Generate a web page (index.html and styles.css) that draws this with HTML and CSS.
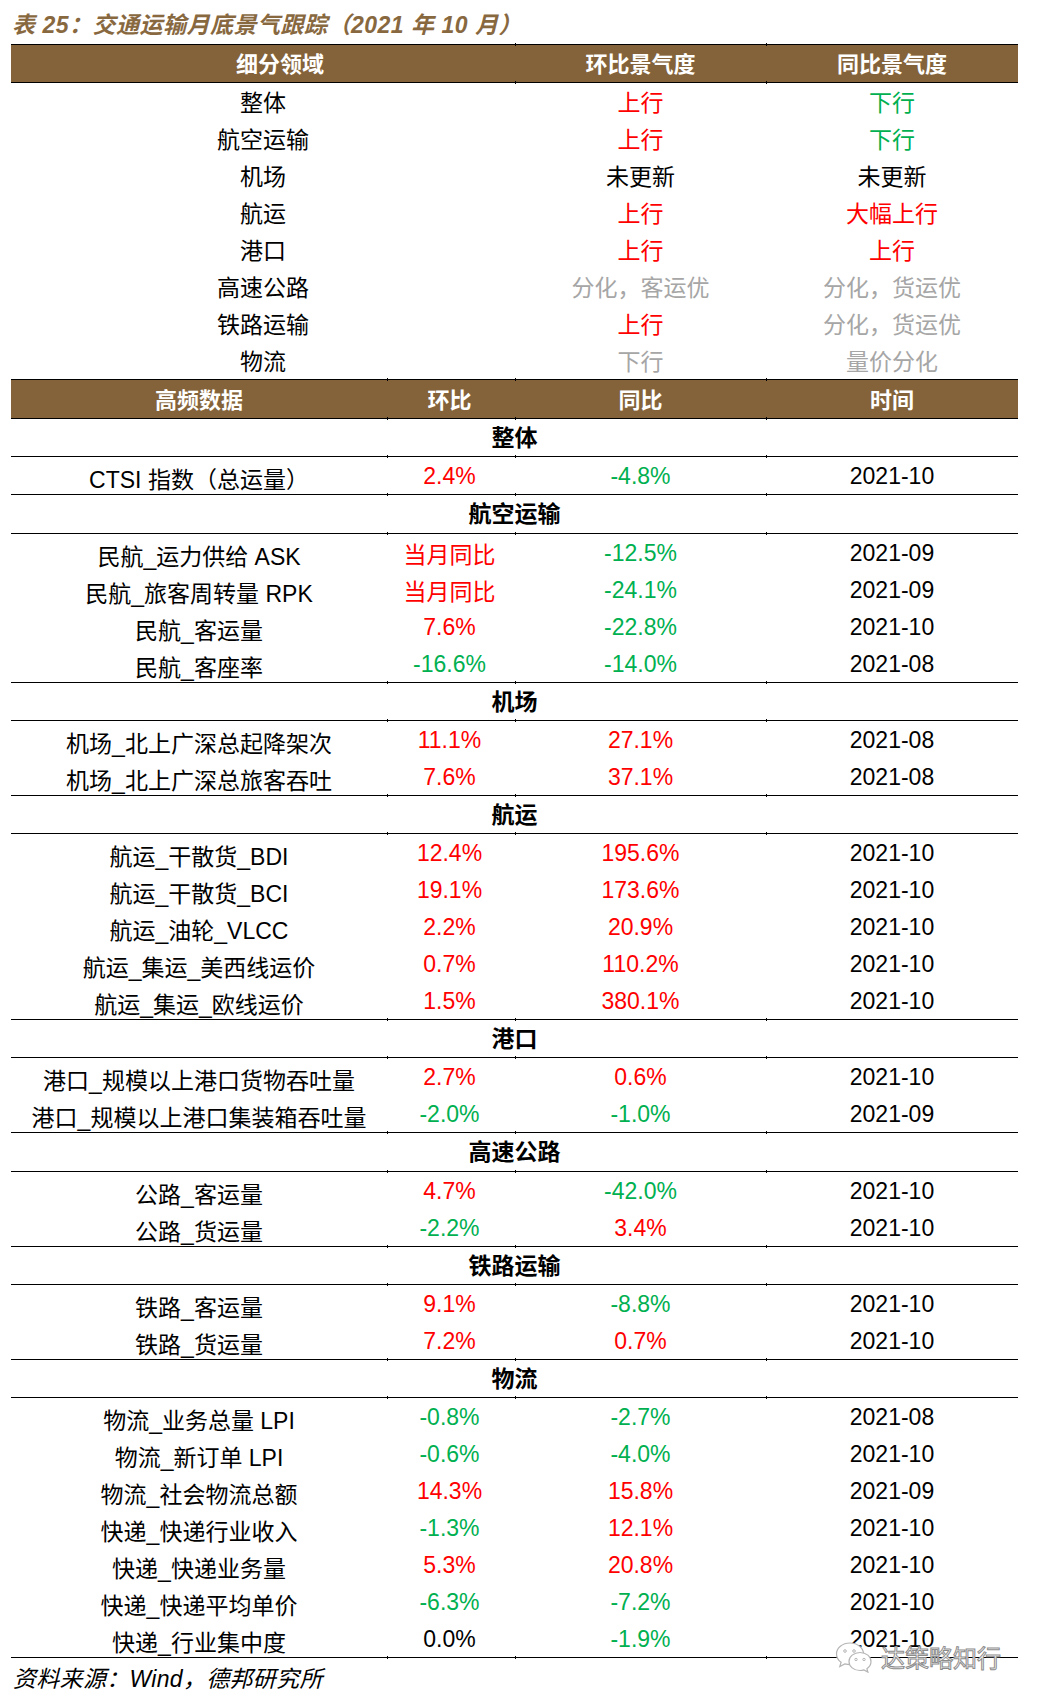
FILE: index.html
```html
<!DOCTYPE html>
<html lang="zh-CN">
<head>
<meta charset="utf-8">
<title>交通运输月底景气跟踪</title>
<link rel="stylesheet" href="styles.css">
</head>
<body>
<div class="page">
  <h1 class="title">表 25：交通运输月底景气跟踪（2021 年 10 月）</h1>
  <div class="tbl">
    <div class="rule c3"><i></i><i></i><i></i></div>
    <div class="hdr c3"><div class="h-first">细分领域</div><div>环比景气度</div><div>同比景气度</div></div>
    <div class="rule c3"><i></i><i></i><i></i></div>

    <div class="row1 c3"><div>整体</div><div class="up">上行</div><div class="dn">下行</div></div>
    <div class="row1 c3"><div>航空运输</div><div class="up">上行</div><div class="dn">下行</div></div>
    <div class="row1 c3"><div>机场</div><div>未更新</div><div>未更新</div></div>
    <div class="row1 c3"><div>航运</div><div class="up">上行</div><div class="up">大幅上行</div></div>
    <div class="row1 c3"><div>港口</div><div class="up">上行</div><div class="up">上行</div></div>
    <div class="row1 c3"><div>高速公路</div><div class="gr">分化，客运优</div><div class="gr">分化，货运优</div></div>
    <div class="row1 c3"><div>铁路运输</div><div class="up">上行</div><div class="gr">分化，货运优</div></div>
    <div class="row1 c3"><div>物流</div><div class="gr">下行</div><div class="gr">量价分化</div></div>

    <div class="rule c4"><i></i><i></i><i></i><i></i></div>
    <div class="hdr hdr2 c4"><div>高频数据</div><div class="v2">环比</div><div>同比</div><div>时间</div></div>
    <div class="rule c4"><i></i><i></i><i></i><i></i></div>

    <div class="sec">整体</div>
    <div class="rule c4"><i></i><i></i><i></i><i></i></div>
    <div class="row2 c4"><div>CTSI 指数（总运量）</div><div class="up">2.4%</div><div class="dn">-4.8%</div><div>2021-10</div></div>
    <div class="rule c4"><i></i><i></i><i></i><i></i></div>

    <div class="sec">航空运输</div>
    <div class="rule c4"><i></i><i></i><i></i><i></i></div>
    <div class="row2 c4"><div>民航_运力供给 ASK</div><div class="up txt">当月同比</div><div class="dn">-12.5%</div><div>2021-09</div></div>
    <div class="row2 c4"><div>民航_旅客周转量 RPK</div><div class="up txt">当月同比</div><div class="dn">-24.1%</div><div>2021-09</div></div>
    <div class="row2 c4"><div>民航_客运量</div><div class="up">7.6%</div><div class="dn">-22.8%</div><div>2021-10</div></div>
    <div class="row2 c4"><div>民航_客座率</div><div class="dn">-16.6%</div><div class="dn">-14.0%</div><div>2021-08</div></div>
    <div class="rule c4"><i></i><i></i><i></i><i></i></div>

    <div class="sec">机场</div>
    <div class="rule c4"><i></i><i></i><i></i><i></i></div>
    <div class="row2 c4"><div>机场_北上广深总起降架次</div><div class="up">11.1%</div><div class="up">27.1%</div><div>2021-08</div></div>
    <div class="row2 c4"><div>机场_北上广深总旅客吞吐</div><div class="up">7.6%</div><div class="up">37.1%</div><div>2021-08</div></div>
    <div class="rule c4"><i></i><i></i><i></i><i></i></div>

    <div class="sec">航运</div>
    <div class="rule c4"><i></i><i></i><i></i><i></i></div>
    <div class="row2 c4"><div>航运_干散货_BDI</div><div class="up">12.4%</div><div class="up">195.6%</div><div>2021-10</div></div>
    <div class="row2 c4"><div>航运_干散货_BCI</div><div class="up">19.1%</div><div class="up">173.6%</div><div>2021-10</div></div>
    <div class="row2 c4"><div>航运_油轮_VLCC</div><div class="up">2.2%</div><div class="up">20.9%</div><div>2021-10</div></div>
    <div class="row2 c4"><div>航运_集运_美西线运价</div><div class="up">0.7%</div><div class="up">110.2%</div><div>2021-10</div></div>
    <div class="row2 c4"><div>航运_集运_欧线运价</div><div class="up">1.5%</div><div class="up">380.1%</div><div>2021-10</div></div>
    <div class="rule c4"><i></i><i></i><i></i><i></i></div>

    <div class="sec">港口</div>
    <div class="rule c4"><i></i><i></i><i></i><i></i></div>
    <div class="row2 c4"><div>港口_规模以上港口货物吞吐量</div><div class="up">2.7%</div><div class="up">0.6%</div><div>2021-10</div></div>
    <div class="row2 c4"><div>港口_规模以上港口集装箱吞吐量</div><div class="dn">-2.0%</div><div class="dn">-1.0%</div><div>2021-09</div></div>
    <div class="rule c4"><i></i><i></i><i></i><i></i></div>

    <div class="sec">高速公路</div>
    <div class="rule c4"><i></i><i></i><i></i><i></i></div>
    <div class="row2 c4"><div>公路_客运量</div><div class="up">4.7%</div><div class="dn">-42.0%</div><div>2021-10</div></div>
    <div class="row2 c4"><div>公路_货运量</div><div class="dn">-2.2%</div><div class="up">3.4%</div><div>2021-10</div></div>
    <div class="rule c4"><i></i><i></i><i></i><i></i></div>

    <div class="sec">铁路运输</div>
    <div class="rule c4"><i></i><i></i><i></i><i></i></div>
    <div class="row2 c4"><div>铁路_客运量</div><div class="up">9.1%</div><div class="dn">-8.8%</div><div>2021-10</div></div>
    <div class="row2 c4"><div>铁路_货运量</div><div class="up">7.2%</div><div class="up">0.7%</div><div>2021-10</div></div>
    <div class="rule c4"><i></i><i></i><i></i><i></i></div>

    <div class="sec">物流</div>
    <div class="rule c4"><i></i><i></i><i></i><i></i></div>
    <div class="row2 c4"><div>物流_业务总量 LPI</div><div class="dn">-0.8%</div><div class="dn">-2.7%</div><div>2021-08</div></div>
    <div class="row2 c4"><div>物流_新订单 LPI</div><div class="dn">-0.6%</div><div class="dn">-4.0%</div><div>2021-10</div></div>
    <div class="row2 c4"><div>物流_社会物流总额</div><div class="up">14.3%</div><div class="up">15.8%</div><div>2021-09</div></div>
    <div class="row2 c4"><div>快递_快递行业收入</div><div class="dn">-1.3%</div><div class="up">12.1%</div><div>2021-10</div></div>
    <div class="row2 c4"><div>快递_快递业务量</div><div class="up">5.3%</div><div class="up">20.8%</div><div>2021-10</div></div>
    <div class="row2 c4"><div>快递_快递平均单价</div><div class="dn">-6.3%</div><div class="dn">-7.2%</div><div>2021-10</div></div>
    <div class="row2 c4"><div>快递_行业集中度</div><div>0.0%</div><div class="dn">-1.9%</div><div>2021-10</div></div>
    <div class="rule c4"><i></i><i></i><i></i><i></i></div>
  </div>
  <p class="source">资料来源：Wind，德邦研究所</p>

  <div class="wm">
    <svg class="wm-icon" width="40" height="32" viewBox="0 0 40 32">
      <path d="M16 2C8.3 2 2.5 7 2.5 13c0 3.4 1.8 6.3 4.6 8.3l-1.3 4.2 5-2.6c1.7.5 3.4.8 5.2.8 7.7 0 13.5-5 13.5-10.7C29.5 7 23.7 2 16 2z" fill="#fff" stroke="#b5b5b5" stroke-width="1.2"/>
      <circle cx="11" cy="10" r="1.3" fill="none" stroke="#b5b5b5" stroke-width="1"/>
      <circle cx="20" cy="10" r="1.3" fill="none" stroke="#b5b5b5" stroke-width="1"/>
      <path d="M26 11.5c-6.3 0-11 4.1-11 9 0 4.9 4.7 9 11 9 1.4 0 2.7-.2 3.9-.6l4 2.2-1-3.4c2.5-1.7 4.1-4.3 4.1-7.2 0-4.9-4.7-9-11-9z" fill="#fff" stroke="#b5b5b5" stroke-width="1.2"/>
      <circle cx="22" cy="18.5" r="1.2" fill="none" stroke="#b5b5b5" stroke-width="1"/>
      <circle cx="30" cy="18.5" r="1.2" fill="none" stroke="#b5b5b5" stroke-width="1"/>
    </svg>
    <span class="wm-text">达策略知行</span>
  </div>
</div>
</body>
</html>
```

FILE: styles.css
```css
* {
  box-sizing: border-box;
  margin: 0;
  padding: 0;
}

body {
  margin: 0;
  background: #ffffff;
  color: #000000;
  font-family: "Liberation Sans", "Noto Sans CJK SC", sans-serif;
}

.page {
  position: relative;
  width: 1039px;
  height: 1702px;
  padding: 9px 0 0 11px;
}

.title {
  height: 35px;
  padding-top: 1px;
  margin-left: 1px;
  font-size: 23px;
  line-height: 30px;
  font-weight: 700;
  font-style: italic;
  letter-spacing: 0.5px;
  color: #88683f;
}

.tbl {
  width: 1007px;
}

.c3 {
  display: grid;
  grid-template-columns: 504px 251px 252px;
}

.c4 {
  display: grid;
  grid-template-columns: 376px 128px 251px 252px;
}

.rule {
  height: 1px;
  background: #000000;
}

.rule i + i {
  margin: -1px 0;
  border-left: 1px solid #000000;
}

.hdr {
  height: 37px;
  padding-top: 3px;
  background: #84633a;
  color: #ffffff;
  font-size: 22px;
  line-height: 34px;
  font-weight: 700;
  text-align: center;
}

.hdr2 {
  height: 38px;
  line-height: 35px;
}

.h-first {
  padding-left: 34px;
}

.v2 {
  padding-right: 3px;
}

.row1 {
  height: 37px;
  padding-top: 4px;
  font-size: 23px;
  line-height: 33px;
  text-align: center;
  white-space: nowrap;
}

.row2 {
  height: 37px;
  font-size: 23px;
  text-align: center;
  white-space: nowrap;
}

.row2 > div {
  padding-top: 2px;
  line-height: 35px;
}

.row2 > div:first-child {
  padding-top: 9px;
  line-height: 28px;
}

.row2 > div:nth-child(2) {
  padding-right: 3px;
}

.row2 > div.txt {
  padding-top: 5px;
  line-height: 32px;
}

.sec {
  height: 37.25px;
  padding-top: 1px;
  font-size: 23px;
  line-height: 36px;
  font-weight: 700;
  text-align: center;
}

.up {
  color: #ff0000;
}

.dn {
  color: #00b050;
}

.gr {
  color: #a6a6a6;
}

.source {
  margin-top: 6px;
  margin-left: 2px;
  font-size: 23px;
  line-height: 30px;
  font-style: italic;
  letter-spacing: 0.3px;
}

.wm {
  position: absolute;
  left: 834px;
  top: 1641px;
  display: flex;
  align-items: center;
  gap: 7px;
}

.wm-icon {
  display: block;
}

.wm-text {
  font-family: "Noto Sans CJK SC", sans-serif;
  font-size: 24px;
  line-height: 28px;
  color: #ffffff;
  -webkit-text-stroke: 1px #8c8c8c;
}
```
